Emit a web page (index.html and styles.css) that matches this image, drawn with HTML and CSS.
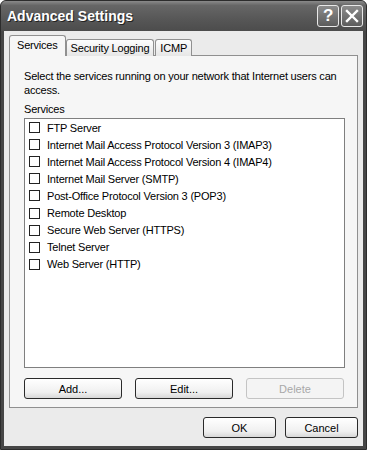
FILE: index.html
```html
<!DOCTYPE html>
<html lang="en">
<head>
    <meta charset="UTF-8">
    <title>Advanced Settings</title>
    <link rel="stylesheet" href="styles.css">
</head>
<body>
    <div class="window">
        <div class="titlebar">
            <span class="title">Advanced Settings</span>
            <div class="title-buttons">
                <span class="tbtn">?</span>
                <span class="tbtn">
                    <svg width="14" height="14" viewBox="0 0 14 14"><path d="M2 2 L12 12 M12 2 L2 12" stroke="#fff" stroke-width="2.4" stroke-linecap="square"/></svg>
                </span>
            </div>
        </div>
        <div class="client">
            <div class="tabs">
                <div class="tab active">Services</div>
                <div class="tab">Security Logging</div>
                <div class="tab">ICMP</div>
            </div>
            <div class="panel">
                <p class="intro">Select the services running on your network that Internet users can access.</p>
                <div class="label">Services</div>
                <div class="listbox">
                    <label class="item"><span class="check"></span>FTP Server</label>
                    <label class="item"><span class="check"></span>Internet Mail Access Protocol Version 3 (IMAP3)</label>
                    <label class="item"><span class="check"></span>Internet Mail Access Protocol Version 4 (IMAP4)</label>
                    <label class="item"><span class="check"></span>Internet Mail Server (SMTP)</label>
                    <label class="item"><span class="check"></span>Post-Office Protocol Version 3 (POP3)</label>
                    <label class="item"><span class="check"></span>Remote Desktop</label>
                    <label class="item"><span class="check"></span>Secure Web Server (HTTPS)</label>
                    <label class="item"><span class="check"></span>Telnet Server</label>
                    <label class="item"><span class="check"></span>Web Server (HTTP)</label>
                </div>
                <div class="panel-buttons">
                    <button class="button">Add...</button>
                    <button class="button">Edit...</button>
                    <button class="button disabled">Delete</button>
                </div>
            </div>
            <div class="dialog-buttons">
                <button class="button">OK</button>
                <button class="button">Cancel</button>
            </div>
        </div>
    </div>
</body>
</html>
```

FILE: styles.css
```css
body {
    margin: 0;
    padding: 0;
    background-color: #ffffff;
    font-family: 'Liberation Sans', Arial, sans-serif;
    font-size: 11px;
    letter-spacing: -0.2px;
    color: #000;
}

.window {
    width: 367px;
    height: 450px;
    box-sizing: border-box;
    background-color: #464646;
    border: 1px solid #2c2c2c;
    border-top-left-radius: 6px;
    border-top-right-radius: 6px;
    display: flex;
    flex-direction: column;
    overflow: hidden;
}

.titlebar {
    height: 30px;
    flex-shrink: 0;
    display: flex;
    align-items: center;
    justify-content: space-between;
    padding: 0 3px 0 6px;
    background: linear-gradient(#8a8a8a, #666 15%, #575757 60%, #4c4c4c);
}

.title {
    color: #fff;
    font-family: 'Liberation Sans', Arial, sans-serif;
    font-weight: bold;
    font-size: 14px;
    letter-spacing: 0;
    text-shadow: 1px 1px 0 #222;
}

.title-buttons {
    display: flex;
    gap: 2px;
}

.tbtn {
    width: 20px;
    height: 20px;
    border: 1px solid #e8e8e8;
    border-radius: 3px;
    background: linear-gradient(#8c8c8c, #5c5c5c);
    color: #fff;
    font-family: 'Liberation Sans', Arial, sans-serif;
    font-weight: bold;
    font-size: 17px;
    display: flex;
    align-items: center;
    justify-content: center;
}

.client {
    flex: 1;
    margin: 0 3px 3px 3px;
    background-color: #ebebeb;
    padding: 5px 5px 0 5px;
    display: flex;
    flex-direction: column;
}

.tabs {
    display: flex;
    align-items: flex-end;
    height: 20px;
    position: relative;
    z-index: 1;
    margin-bottom: -1px;
}

.tab {
    height: 16px;
    padding: 0 4px;
    border: 1px solid #909090;
    border-bottom: none;
    border-radius: 3px 3px 0 0;
    background: linear-gradient(#fdfdfd, #e6e6e6);
    line-height: 16px;
}

.tab.active {
    height: 20px;
    padding: 0 7px;
    background: #f6f6f6;
    line-height: 18px;
}

.tab + .tab {
    margin-left: 1px;
}

.tab.active + .tab {
    margin-left: 0;
}

.panel {
    height: 353px;
    box-sizing: border-box;
    border: 1px solid #909090;
    background-color: #f6f6f6;
    padding: 13px 12px 0 14px;
    display: flex;
    flex-direction: column;
}

.intro {
    margin: 0;
    line-height: 14px;
}

.label {
    margin-top: 5px;
    line-height: 14px;
}

.listbox {
    height: 250px;
    box-sizing: border-box;
    margin-top: 2px;
    border: 1px solid #7f7f7f;
    background-color: #fff;
    padding: 0 4px;
}

.item {
    display: flex;
    align-items: center;
    height: 17.1px;
}

.check {
    width: 9px;
    height: 9px;
    border: 1px solid #222;
    background: #fff;
    margin-right: 7px;
    flex-shrink: 0;
}

.panel-buttons {
    display: flex;
    justify-content: space-between;
    margin-top: 10px;
    padding-right: 1px;
}

.button {
    width: 98px;
    height: 21px;
    box-sizing: border-box;
    border: 1px solid #2a2a2a;
    border-radius: 3px;
    background: linear-gradient(#ffffff, #f0f0f0 70%, #d8d8d8);
    font-family: 'Liberation Sans', Arial, sans-serif;
    font-size: 11px;
    color: #000;
    padding: 0;
}

.button.disabled {
    border-color: #c4c4c4;
    background: #f4f4f4;
    color: #a8a8a8;
}

.dialog-buttons {
    display: flex;
    justify-content: flex-end;
    gap: 9px;
    margin-top: 9px;
}

.dialog-buttons .button {
    width: 73px;
}
```
